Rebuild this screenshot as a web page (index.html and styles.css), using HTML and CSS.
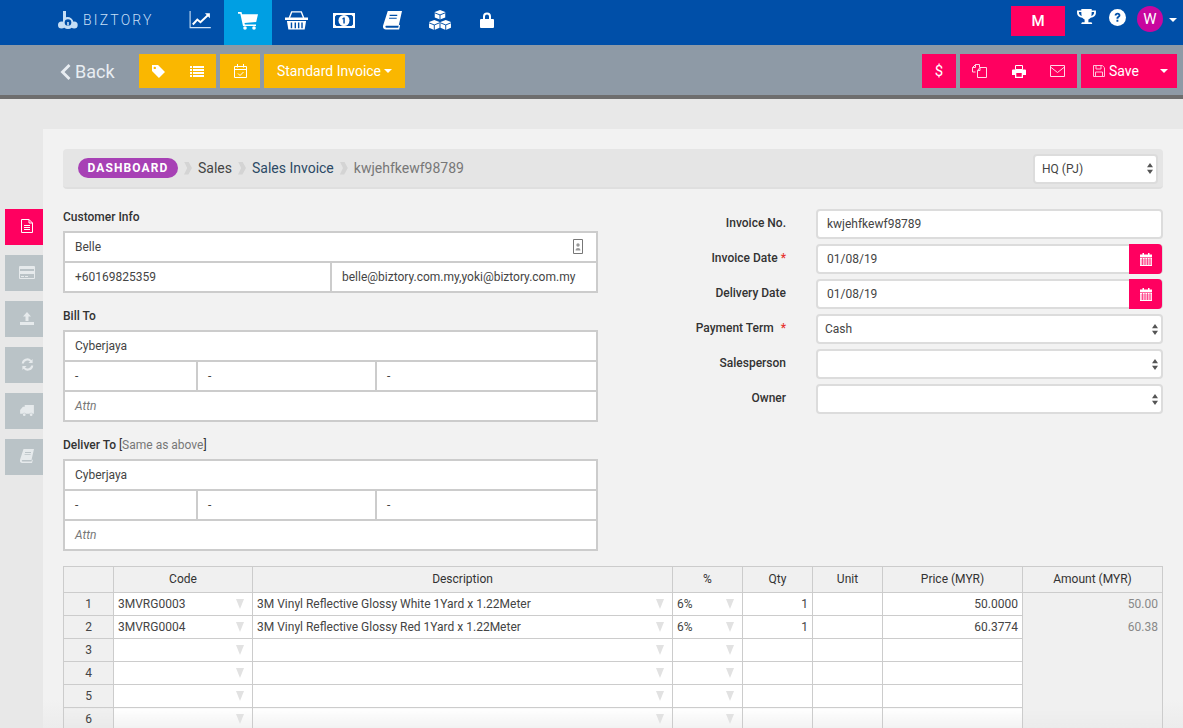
FILE: index.html
```html
<!DOCTYPE html>
<html lang="en">
<head>
<meta charset="utf-8">
<title>Biztory - Sales Invoice</title>
<link rel="stylesheet" href="styles.css">
</head>
<body>
<svg class="sprite" width="0" height="0" aria-hidden="true">
  <symbol id="i-arrows" viewBox="0 0 6 11"><path d="M3 0l3 4.300H0zM3 11L0 6.700h6z"/></symbol>
  <symbol id="i-cal" viewBox="0 0 12 13"><path d="M2.500 0h1.500v1.500h4V0h1.500v1.500H12V13H0V1.500h2.500z" fill="#fff"/><path d="M0 4.500h12M.5 7h11M.5 9h11M.5 11h11M2.500 5v7M5 5v7M7.500 5v7M10 5v7" stroke="#ff0060" stroke-width=".6" fill="none"/></symbol>
</svg>

<header class="topbar">
  <div class="logo">
    <svg class="logo-mark" viewBox="0 0 20 18" width="20" height="18"><path d="M5 0h3v6.200A6 6 0 0 1 15.500 12H5z" fill="#c6dff6"/><circle cx="3.500" cy="14" r="3.500" fill="#c6dff6"/><circle cx="16.200" cy="14" r="3.500" fill="#c6dff6"/><circle cx="10" cy="12.500" r="5.500" fill="#c6dff6"/><circle cx="10" cy="11.500" r="3.300" fill="#004fa8"/><path d="M9.200 11h1.600v3.500H9.200z" fill="#c6dff6"/></svg>
    <span>BIZTORY</span>
  </div>
  <nav class="nav">
    <a class="nav-item"><svg viewBox="0 0 24 20" width="24" height="18"><path d="M1 0v18.500h23" fill="none" stroke="#cfe3f7" stroke-width="1.200"/><path d="M4 15l5-5.500 3.500 3L21 4.500" fill="none" stroke="#fff" stroke-width="2.200"/><path d="M17.500 2.500H23V8z" fill="#fff"/></svg></a>
    <a class="nav-item is-active"><svg viewBox="0 0 20 20" width="20" height="20"><path d="M0 2h3.500l.6 2.200H20l-1.800 7.800-11.700 1 .4 1.500H18V16H5L2.300 3.800H0z" fill="#fff"/><circle cx="7" cy="18" r="1.800" fill="#fff"/><circle cx="16" cy="18" r="1.800" fill="#fff"/></svg></a>
    <a class="nav-item"><svg viewBox="0 0 24 20" width="23" height="20"><path d="M4.500 8L7 1.500h10L19.500 8" fill="none" stroke="#fff" stroke-width="1.500"/><path d="M0 7.500h24V10H0zM2 11h20l-1.500 9h-17zM6 12.500v6h1.500v-6zm4 0v6h1.500v-6zm3.500 0v6H15v-6zm3.500 0v6h1.500v-6z" fill="#fff" fill-rule="evenodd"/></svg></a>
    <a class="nav-item"><svg viewBox="0 0 22 15" width="22" height="15"><path d="M0 0h22v15H0zM3.500 2L2 3.500v8L3.500 13h15l1.500-1.500v-8L18.500 2z" fill="#fff" fill-rule="evenodd"/><circle cx="11" cy="7.500" r="5.500" fill="#fff"/><path d="M10.500 4.500h1.300v6h-1.500V6.100l-1 .5V5.500z" fill="#004fa8"/></svg></a>
    <a class="nav-item"><svg viewBox="0 0 20 20" width="19" height="19"><path d="M5 0h15l-3.500 15.500H3.500c-1.200 0-1.300 2 0 2H16l.8-3 1.200.5-1 4.500H3c-2.500 0-3.500-2-2.800-4.500zM7 4v1.200h8V4zm-.6 3v1.200h8V7z" fill="#fff" fill-rule="evenodd"/></svg></a>
    <a class="nav-item"><svg viewBox="0 0 24 21" width="24" height="20"><path d="M12 0l5.500 2.200v5.600L12 10 6.500 7.800V2.200zM6 10.500l5.500 2.200v6L6 21 .5 18.700v-6zM18 10.500l5.500 2.200v6L18 21l-5.500-2.300v-6z" fill="#fff"/><path d="M12 5.200v5M6 15.700v5.300M18 15.700v5.300M6.500 3l5.500 2.200L17.500 3M.5 13.500L6 15.700l5.500-2.200M12.500 13.500l5.500 2.200 5.500-2.200" fill="none" stroke="#004fa8" stroke-width="1"/></svg></a>
    <a class="nav-item nav-lock"><svg viewBox="0 0 14 16" width="14" height="16"><path d="M3 7V4.500a4 4 0 0 1 8 0V7h2a1 1 0 0 1 1 1v7a1 1 0 0 1-1 1H1a1 1 0 0 1-1-1V8a1 1 0 0 1 1-1zm2 0h4V4.500a2 2 0 0 0-4 0z" fill="#fff"/></svg></a>
  </nav>
  <div class="top-right">
    <button class="m-btn">M</button>
    <svg class="trophy" viewBox="0 0 20 18" width="19" height="17"><path d="M4.500 0h11v1.500H20V4c0 3-2.500 5-5.500 5.200-.8 1-1.600 1.500-2.500 1.800v3h2.500c1 0 1.500.7 1.500 1.500V16H4.500v-.5c0-.8.500-1.500 1.500-1.500H8v-3c-.9-.3-1.700-.8-2.500-1.800C2.500 9 0 7 0 4V1.500h4.500zM2 3.300V4c0 1.600 1.300 3 2.900 3.400-.3-1.100-.4-2.600-.4-4.100zm16 0h-2.500c0 1.500-.1 3-.4 4.100C16.700 7 18 5.600 18 4z" fill="#fff" fill-rule="evenodd"/></svg>
    <svg class="help" viewBox="0 0 18 18" width="17" height="17"><circle cx="9" cy="9" r="9" fill="#fff"/><path d="M6 6.800C6 4.900 7.400 4 9.100 4c1.700 0 3 1.100 3 2.700 0 2.200-2.200 2.100-2.200 3.700H7.900c0-2.600 2.200-2.500 2.200-3.700 0-.5-.4-.9-1-.9-.7 0-1.100.4-1.100 1zM7.900 11.500h2v2h-2z" fill="#004fa8"/></svg>
    <span class="avatar">W</span>
    <i class="caret caret-top"></i>
  </div>
</header>

<section class="toolbar">
  <a class="back"><svg viewBox="0 0 10 16" width="11" height="16"><path d="M8 0l2 2-6 6 6 6-2 2-8-8z" fill="#e8edf2"/></svg><span>Back</span></a>
  <div class="btn-group yellow wide">
    <span class="tool"><svg viewBox="0 0 14 14" width="13" height="13"><path d="M0 0h6.500L14 7.500 7.500 14 0 6.500zM3 1.800a1.300 1.300 0 1 0 0 2.600 1.300 1.300 0 0 0 0-2.600z" fill="#fff" fill-rule="evenodd"/></svg></span>
    <span class="tool"><svg viewBox="0 0 14 11" width="14" height="11"><path d="M0 0h2v2H0zm3 0h11v2H3zM0 3h2v2H0zm3 0h11v2H3zM0 6h2v2H0zm3 0h11v2H3zM0 9h2v2H0zm3 0h11v2H3z" fill="#fff"/></svg></span>
  </div>
  <div class="btn-group yellow cal-btn">
    <svg viewBox="0 0 13 14" width="13" height="14"><path d="M.5 2.500h12v11H.5zM.5 5.500h12M3.500 0v3.500M9.500 0v3.500M4 9.500l2 2 3.500-3.500" fill="none" stroke="#fff"/></svg>
  </div>
  <button class="btn-group yellow type-btn">Standard Invoice<i class="caret"></i></button>
  <div class="toolbar-right">
    <div class="btn-group pink dollar">$</div>
    <div class="btn-group pink actions">
      <span class="tool"><svg viewBox="0 0 15 14" width="15" height="14"><path d="M5.500 6.500L8 3.500h6.500v10h-9zM8 3.500v3H5.500M3.500 8H.5V3.500L3.500.5h4v3M3.500.5v3h-3" fill="none" stroke="#ffd9e7"/></svg></span>
      <span class="tool"><svg viewBox="0 0 14 13" width="14" height="13"><path d="M3.500.5h7v4h-7z" fill="none" stroke="#fff"/><path d="M1 4.500h12a1 1 0 0 1 1 1V10h-3v3H3v-3H0V5.500a1 1 0 0 1 1-1zM4.300 8v3.800h5.400V8z" fill="#fff" fill-rule="evenodd"/></svg></span>
      <span class="tool"><svg viewBox="0 0 15 12" width="15" height="12"><path d="M.5.500h14v11H.5zM.5 2l7 5.500 7-5.500" fill="none" stroke="#ffd9e7"/></svg></span>
    </div>
    <div class="btn-group pink save">
      <span class="save-label"><svg viewBox="0 0 12 12" width="12" height="12"><path d="M.5.500h8.800l2.200 2.200v8.800H.5zM3 .5v3.500h5V.5M2.500 11.500V7h7v4.500" fill="none" stroke="#ffc4da"/></svg>Save</span>
      <i class="caret"></i>
    </div>
  </div>
</section>

<div class="layout">
  <aside class="side">
    <a class="side-tab is-active"><svg viewBox="0 0 12 14" width="12" height="14"><path d="M.5.500h7.500l3.500 3.500v9.500H.5zM8 .5V4h3.500M3 6.500h6M3 8.500h6M3 10.500h6" fill="none" stroke="#fff"/></svg></a>
    <a class="side-tab"><svg viewBox="0 0 16 13" width="16" height="13"><path d="M1 0h14a1 1 0 0 1 1 1v11a1 1 0 0 1-1 1H1a1 1 0 0 1-1-1V1a1 1 0 0 1 1-1zm0 3v2h14V3zm0 5v4h14V8zm1 2h3v1H2zm4 0h3v1H6z" fill="#e6eaec" fill-rule="evenodd"/></svg></a>
    <a class="side-tab"><svg viewBox="0 0 14 13" width="14" height="13"><path d="M7 0l4 4.500H8.500V9h-3V4.500H3zM0 10h14v3H0z" fill="#e6eaec"/></svg></a>
    <a class="side-tab"><svg viewBox="0 0 14 14" width="13" height="13"><path d="M12.500 1v4.500H8l1.700-1.700A4 4 0 0 0 3 6H.8a6 6 0 0 1 10.400-3.700zM1.500 13V8.500H6L4.300 10.200A4 4 0 0 0 11 8h2.200a6 6 0 0 1-10.400 3.700z" fill="#e6eaec"/></svg></a>
    <a class="side-tab"><svg viewBox="0 0 15 12" width="14" height="11"><path d="M5 0h10v9.500h-1.200a2 2 0 0 0-3.600 0H6.300a2 2 0 0 0-3.600 0H0V5.500L3 2h2zM4.500 9a1.500 1.500 0 1 1 0 3 1.500 1.500 0 0 1 0-3zM12 9a1.500 1.500 0 1 1 0 3 1.500 1.500 0 0 1 0-3z" fill="#e6eaec"/></svg></a>
    <a class="side-tab"><svg viewBox="0 0 14 14" width="14" height="14"><path d="M3.500 0H14l-2.500 11H2.500c-.9 0-1 1.500 0 1.500h9l.5-2 .8.400L12 14H2C.3 14-.4 12.500 0 10.800zM5 3v.9h6V3zm-.4 2.200v.9h6v-.9z" fill="#e6eaec" fill-rule="evenodd"/></svg></a>
  </aside>

  <main class="panel">
    <div class="crumbs">
      <span class="badge">DASHBOARD</span>
      <i class="sep"></i><a class="crumb">Sales</a>
      <i class="sep"></i><a class="crumb crumb-link">Sales Invoice</a>
      <i class="sep"></i><span class="crumb crumb-current">kwjehfkewf98789</span>
      <div class="field select branch"><span>HQ (PJ)</span><svg width="6" height="11"><use href="#i-arrows"/></svg></div>
    </div>

    <div class="form">
      <div class="form-left">
        <div class="group-title">Customer Info</div>
        <div class="box">
          <div class="box-row"><div class="cell">Belle</div>
            <svg class="contact" viewBox="0 0 10 15" width="10" height="15"><path d="M.5.500h9v14h-9z" fill="none" stroke="#777"/><circle cx="5" cy="6" r="1.700" fill="#999"/><path d="M2.500 11.500c0-3.300 5-3.300 5 0z" fill="#999"/></svg>
          </div>
          <div class="box-row"><div class="cell c-265">+60169825359</div><div class="cell">belle@biztory.com.my,yoki@biztory.com.my</div></div>
        </div>

        <div class="group-title spaced">Bill To</div>
        <div class="box">
          <div class="box-row"><div class="cell">Cyberjaya</div></div>
          <div class="box-row"><div class="cell c-131">-</div><div class="cell c-177">-</div><div class="cell">-</div></div>
          <div class="box-row"><div class="cell attn">Attn</div></div>
        </div>

        <div class="group-title spaced">Deliver To <span class="same">[<span class="same-text">Same as above</span>]</span></div>
        <div class="box">
          <div class="box-row"><div class="cell">Cyberjaya</div></div>
          <div class="box-row"><div class="cell c-131">-</div><div class="cell c-177">-</div><div class="cell">-</div></div>
          <div class="box-row"><div class="cell attn">Attn</div></div>
        </div>
      </div>

      <div class="form-right">
        <label class="f-label">Invoice No.</label>
        <div class="field"><span>kwjehfkewf98789</span></div>
        <label class="f-label">Invoice Date <b class="req">*</b></label>
        <div class="field has-addon"><span>01/08/19</span><span class="addon"><svg width="12" height="13"><use href="#i-cal"/></svg></span></div>
        <label class="f-label">Delivery Date</label>
        <div class="field has-addon"><span>01/08/19</span><span class="addon"><svg width="12" height="13"><use href="#i-cal"/></svg></span></div>
        <label class="f-label">Payment Term <b class="req wide-req">*</b></label>
        <div class="field select"><span>Cash</span><svg width="6" height="11"><use href="#i-arrows"/></svg></div>
        <label class="f-label">Salesperson</label>
        <div class="field select"><span></span><svg width="6" height="11"><use href="#i-arrows"/></svg></div>
        <label class="f-label">Owner</label>
        <div class="field select"><span></span><svg width="6" height="11"><use href="#i-arrows"/></svg></div>
      </div>
    </div>

    <table class="grid">
      <colgroup><col class="w50"><col class="w139"><col class="w420"><col class="w70"><col class="w70"><col class="w70"><col class="w140"><col class="w140"></colgroup>
      <thead>
        <tr><th></th><th>Code</th><th>Description</th><th>%</th><th>Qty</th><th>Unit</th><th>Price (MYR)</th><th>Amount (MYR)</th></tr>
      </thead>
      <tbody>
        <tr><td class="num">1</td><td class="dd">3MVRG0003</td><td class="dd">3M Vinyl Reflective Glossy White 1Yard x 1.22Meter</td><td class="dd">6%</td><td class="r">1</td><td></td><td class="r">50.0000</td><td class="amt">50.00</td></tr>
        <tr><td class="num">2</td><td class="dd">3MVRG0004</td><td class="dd">3M Vinyl Reflective Glossy Red 1Yard x 1.22Meter</td><td class="dd">6%</td><td class="r">1</td><td></td><td class="r">60.3774</td><td class="amt">60.38</td></tr>
        <tr><td class="num">3</td><td class="dd"></td><td class="dd"></td><td class="dd"></td><td></td><td></td><td></td><td class="amt"></td></tr>
        <tr><td class="num">4</td><td class="dd"></td><td class="dd"></td><td class="dd"></td><td></td><td></td><td></td><td class="amt"></td></tr>
        <tr><td class="num">5</td><td class="dd"></td><td class="dd"></td><td class="dd"></td><td></td><td></td><td></td><td class="amt"></td></tr>
        <tr class="last"><td class="num">6</td><td class="dd"></td><td class="dd"></td><td class="dd"></td><td></td><td></td><td></td><td class="amt"></td></tr>
      </tbody>
    </table>
  </main>
</div>
</body>
</html>
```

FILE: styles.css
```css
* { box-sizing: border-box; }
html, body { height: 100%; }
body {
  margin: 0;
  height: 728px;
  overflow: hidden;
  background: #e8e8e8;
  color: #444;
  font: 12px/14px Roboto, "Liberation Sans", sans-serif;
}
.sprite { position: absolute; }
button { font: inherit; border: 0; cursor: pointer; }

/* top bar */
.topbar { display: flex; height: 45px; background: #004fa8; padding-left: 58px; }
.logo { display: flex; align-items: center; width: 118px; gap: 5px; padding-bottom: 5px; }
.logo-mark { flex: none; }
.logo span { color: #c6dff6; font-size: 14px; letter-spacing: 2.2px; font-weight: 300; }
.nav { display: flex; }
.nav-item { width: 48px; height: 45px; display: flex; align-items: center; justify-content: center; padding-bottom: 5px; }
.nav-item.is-active { background: #009fe3; }
.nav-lock { padding-right: 2px; }
.top-right { margin-left: auto; display: flex; align-items: flex-start; padding-right: 6px; }
.m-btn { width: 54px; height: 30px; margin-top: 6px; background: #ff0060; color: #fff; font-size: 15px; font-weight: 500; }
.trophy { margin: 9px 0 0 12px; }
.help { margin: 9px 0 0 13px; }
.avatar { width: 26px; height: 26px; margin: 6px 0 0 11px; border-radius: 50%; background: #c8069e; color: #fff; font-size: 15px; line-height: 26px; text-align: center; }
.caret { display: inline-block; width: 0; height: 0; border: 4px solid transparent; border-top-color: #fff; border-bottom-width: 0; margin-left: 3px; }
.caret-top { margin: 18px 0 0 6px; }

/* toolbar */
.toolbar { display: flex; gap: 4px; height: 54px; padding: 9px 6px 0 60px; background: #8e9aa6; border-bottom: 4px solid #6e6e6e; }
.back { display: flex; align-items: center; gap: 4px; width: 75px; color: #e8edf2; font-size: 18px; padding-bottom: 6px; }
.btn-group { height: 34px; display: flex; align-items: center; justify-content: center; color: #fff; }
.yellow { background: #fab700; }
.pink { background: #ff0060; }
.wide { width: 77px; }
.tool { flex: 1; display: flex; align-items: center; justify-content: center; }
.cal-btn { width: 40px; }
.type-btn { width: 141px; font-size: 14px; font-weight: 400; }
.toolbar-right { margin-left: auto; display: flex; gap: 4px; }
.dollar { width: 34px; font-size: 15px; font-weight: 400; }
.actions { width: 117px; }
.save { width: 96px; justify-content: space-between; padding: 0 9px 0 12px; }
.save-label { display: flex; align-items: center; gap: 4px; font-size: 14px; font-weight: 400; }

/* layout */
.layout { display: flex; }
.side { width: 43px; padding: 110px 0 0 5px; display: flex; flex-direction: column; gap: 10px; flex: none; }
.side-tab { height: 36px; background: #bac3c7; display: flex; align-items: center; justify-content: center; padding: 0 0 2px 6px; }
.side-tab.is-active { background: #ff0060; }
.panel { flex: 1; height: 599px; margin-top: 30px; padding: 20px; background: linear-gradient(#f2f2f2 calc(100% - 28px), #ececec); }

/* breadcrumb */
.crumbs { display: flex; align-items: center; height: 40px; padding: 0 5px 0 15px; background: #e5e5e5; border-bottom: 2px solid #dfdfdf; border-radius: 4px; font-size: 14px; }
.badge { width: 100px; height: 20px; border-radius: 10px; background: #a741b5; color: #fff; font-size: 12px; font-weight: 700; line-height: 20px; letter-spacing: 1.1px; text-align: center; }
.sep { width: 8px; height: 13px; margin: 0 6px; background: #d4d4d4; clip-path: polygon(0 0, 55% 0, 100% 50%, 55% 100%, 0 100%, 40% 50%); }
.crumb { color: #444; }
.crumb-link { color: #2c4a66; }
.crumb-current { color: #777; }
.branch { width: 125px; margin-left: auto; margin-bottom: -1px; font-size: 12px; }

/* form */
.form { display: flex; margin-top: 20px; }
.form-left { width: 535px; flex: none; }
.group-title { height: 22px; font-weight: 500; color: #333; line-height: 16px; }
.group-title.spaced { margin-top: 15px; }
.same { font-weight: 400; color: #333; }
.same-text { color: #777; }
.box { border: 2px solid #ccc; background: #fff; }
.box-row { position: relative; display: flex; height: 28px; }
.box-row + .box-row { height: 30px; border-top: 2px solid #ccc; }
.cell { flex: 1; padding-left: 10px; line-height: 28px; color: #444; }
.c-265, .c-131, .c-177 { flex: none; border-right: 2px solid #ccc; }
.c-265 { width: 267px; }
.c-131 { width: 133px; }
.c-177 { width: 179px; }
.attn { font-style: italic; color: #777; }
.contact { position: absolute; right: 13px; top: 6px; }
.form-right { flex: 1; display: grid; grid-template-columns: 1fr 347px; column-gap: 30px; row-gap: 5px; align-content: start; }
.f-label { height: 30px; line-height: 28px; text-align: right; font-weight: 500; color: #333; }
.req { color: #e6322e; font-weight: 500; }
.wide-req { margin-left: 4px; }
.field { position: relative; display: flex; align-items: center; height: 30px; padding-left: 9px; border: 2px solid #dcdcdc; border-radius: 4px; background: #fff; color: #444; }
.field.select { justify-content: space-between; padding: 0 3px 0 7px; }
.field.select svg { fill: #555; }
.has-addon { padding-right: 0; }
.addon { margin-left: auto; width: 33px; height: 30px; margin-right: -1px; display: flex; align-items: center; justify-content: center; background: #ff0060; border-radius: 0 4px 4px 0; }

/* grid */
.grid { width: 1099px; margin-top: 15px; table-layout: fixed; border-collapse: collapse; background: #fff; color: #444; }
.w50 { width: 50px; }
.w70 { width: 70px; }
.w139 { width: 139px; }
.w140 { width: 140px; }
.w420 { width: 420px; }
.grid th { height: 26px; padding: 0 0 2px; background: #f0f0f0; border: 1px solid #ccc; font-weight: 400; color: #333; }
.grid td { height: 23px; padding: 0 4px 1px; border: 1px solid #ccc; white-space: nowrap; overflow: hidden; }
.grid td.num { background: #f0f0f0; text-align: center; }
.grid td.r { text-align: right; }
.grid td.dd { position: relative; }
.grid td.dd::after { content: ""; position: absolute; right: 8px; top: 6px; width: 0; height: 0; border: 4px solid transparent; border-top: 10px solid #e2e2e2; border-bottom: 0; }
.grid td.amt { background: #f0f0f0; color: #888; text-align: right; border-top: 0; border-bottom: 0; padding-right: 4px; }
.grid .last td { background: linear-gradient(#fff, #f1f1f1 21px); }
.grid .last td.num { background: linear-gradient(#f0f0f0, #e9e9e9 21px); }
.grid .last td.amt { background: linear-gradient(#f0f0f0, #ebebeb 21px); }
```
